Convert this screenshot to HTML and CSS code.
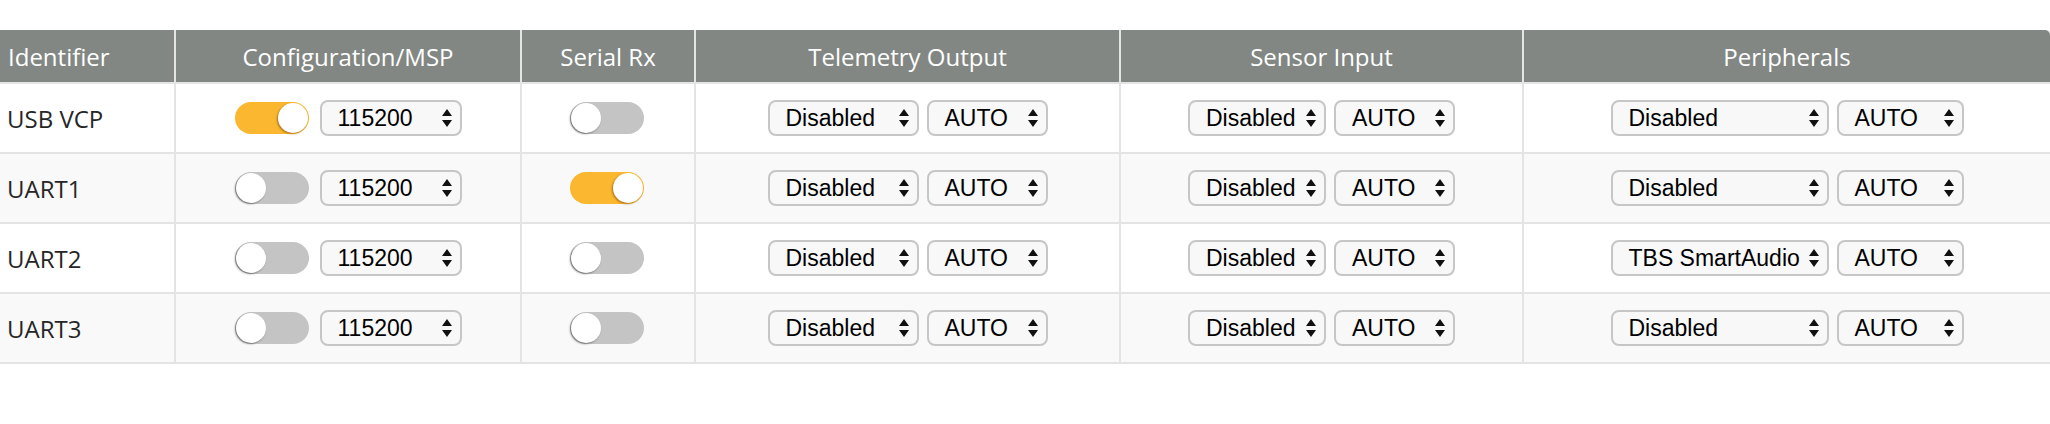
FILE: index.html
```html
<!DOCTYPE html>
<html>
<head>
<meta charset="utf-8">
<link rel="stylesheet" href="styles.css">
</head>
<body>
<div class="wrap">
<table class="ports">
  <colgroup>
    <col class="c-id"><col class="c-cfg"><col class="c-rx"><col class="c-tel"><col class="c-sen"><col class="c-per">
  </colgroup>
  <thead>
    <tr>
      <th class="left">Identifier</th>
      <th>Configuration/MSP</th>
      <th>Serial Rx</th>
      <th>Telemetry Output</th>
      <th>Sensor Input</th>
      <th class="last">Peripherals</th>
    </tr>
  </thead>
  <tbody>
    <tr>
      <td class="left">USB VCP</td>
      <td><div class="cell"><span class="toggle on"><span class="knob"></span></span><div class="sel w-baud"><span>115200</span><svg class="arr" viewBox="0 0 10 18"><path d="M5 0 L10 7 L0 7 Z M0 11 L10 11 L5 18 Z"/></svg></div></div></td>
      <td><div class="cell"><span class="toggle"><span class="knob"></span></span></div></td>
      <td><div class="cell"><div class="sel w-tel"><span>Disabled</span><svg class="arr" viewBox="0 0 10 18"><path d="M5 0 L10 7 L0 7 Z M0 11 L10 11 L5 18 Z"/></svg></div><div class="sel w-auto"><span>AUTO</span><svg class="arr" viewBox="0 0 10 18"><path d="M5 0 L10 7 L0 7 Z M0 11 L10 11 L5 18 Z"/></svg></div></div></td>
      <td><div class="cell"><div class="sel w-sen"><span>Disabled</span><svg class="arr" viewBox="0 0 10 18"><path d="M5 0 L10 7 L0 7 Z M0 11 L10 11 L5 18 Z"/></svg></div><div class="sel w-auto"><span>AUTO</span><svg class="arr" viewBox="0 0 10 18"><path d="M5 0 L10 7 L0 7 Z M0 11 L10 11 L5 18 Z"/></svg></div></div></td>
      <td><div class="cell"><div class="sel w-per"><span>Disabled</span><svg class="arr" viewBox="0 0 10 18"><path d="M5 0 L10 7 L0 7 Z M0 11 L10 11 L5 18 Z"/></svg></div><div class="sel w-auto2"><span>AUTO</span><svg class="arr" viewBox="0 0 10 18"><path d="M5 0 L10 7 L0 7 Z M0 11 L10 11 L5 18 Z"/></svg></div></div></td>
    </tr>
    <tr class="alt">
      <td class="left">UART1</td>
      <td><div class="cell"><span class="toggle"><span class="knob"></span></span><div class="sel w-baud"><span>115200</span><svg class="arr" viewBox="0 0 10 18"><path d="M5 0 L10 7 L0 7 Z M0 11 L10 11 L5 18 Z"/></svg></div></div></td>
      <td><div class="cell"><span class="toggle on"><span class="knob"></span></span></div></td>
      <td><div class="cell"><div class="sel w-tel"><span>Disabled</span><svg class="arr" viewBox="0 0 10 18"><path d="M5 0 L10 7 L0 7 Z M0 11 L10 11 L5 18 Z"/></svg></div><div class="sel w-auto"><span>AUTO</span><svg class="arr" viewBox="0 0 10 18"><path d="M5 0 L10 7 L0 7 Z M0 11 L10 11 L5 18 Z"/></svg></div></div></td>
      <td><div class="cell"><div class="sel w-sen"><span>Disabled</span><svg class="arr" viewBox="0 0 10 18"><path d="M5 0 L10 7 L0 7 Z M0 11 L10 11 L5 18 Z"/></svg></div><div class="sel w-auto"><span>AUTO</span><svg class="arr" viewBox="0 0 10 18"><path d="M5 0 L10 7 L0 7 Z M0 11 L10 11 L5 18 Z"/></svg></div></div></td>
      <td><div class="cell"><div class="sel w-per"><span>Disabled</span><svg class="arr" viewBox="0 0 10 18"><path d="M5 0 L10 7 L0 7 Z M0 11 L10 11 L5 18 Z"/></svg></div><div class="sel w-auto2"><span>AUTO</span><svg class="arr" viewBox="0 0 10 18"><path d="M5 0 L10 7 L0 7 Z M0 11 L10 11 L5 18 Z"/></svg></div></div></td>
    </tr>
    <tr>
      <td class="left">UART2</td>
      <td><div class="cell"><span class="toggle"><span class="knob"></span></span><div class="sel w-baud"><span>115200</span><svg class="arr" viewBox="0 0 10 18"><path d="M5 0 L10 7 L0 7 Z M0 11 L10 11 L5 18 Z"/></svg></div></div></td>
      <td><div class="cell"><span class="toggle"><span class="knob"></span></span></div></td>
      <td><div class="cell"><div class="sel w-tel"><span>Disabled</span><svg class="arr" viewBox="0 0 10 18"><path d="M5 0 L10 7 L0 7 Z M0 11 L10 11 L5 18 Z"/></svg></div><div class="sel w-auto"><span>AUTO</span><svg class="arr" viewBox="0 0 10 18"><path d="M5 0 L10 7 L0 7 Z M0 11 L10 11 L5 18 Z"/></svg></div></div></td>
      <td><div class="cell"><div class="sel w-sen"><span>Disabled</span><svg class="arr" viewBox="0 0 10 18"><path d="M5 0 L10 7 L0 7 Z M0 11 L10 11 L5 18 Z"/></svg></div><div class="sel w-auto"><span>AUTO</span><svg class="arr" viewBox="0 0 10 18"><path d="M5 0 L10 7 L0 7 Z M0 11 L10 11 L5 18 Z"/></svg></div></div></td>
      <td><div class="cell"><div class="sel w-per"><span>TBS SmartAudio</span><svg class="arr" viewBox="0 0 10 18"><path d="M5 0 L10 7 L0 7 Z M0 11 L10 11 L5 18 Z"/></svg></div><div class="sel w-auto2"><span>AUTO</span><svg class="arr" viewBox="0 0 10 18"><path d="M5 0 L10 7 L0 7 Z M0 11 L10 11 L5 18 Z"/></svg></div></div></td>
    </tr>
    <tr class="alt">
      <td class="left">UART3</td>
      <td><div class="cell"><span class="toggle"><span class="knob"></span></span><div class="sel w-baud"><span>115200</span><svg class="arr" viewBox="0 0 10 18"><path d="M5 0 L10 7 L0 7 Z M0 11 L10 11 L5 18 Z"/></svg></div></div></td>
      <td><div class="cell"><span class="toggle"><span class="knob"></span></span></div></td>
      <td><div class="cell"><div class="sel w-tel"><span>Disabled</span><svg class="arr" viewBox="0 0 10 18"><path d="M5 0 L10 7 L0 7 Z M0 11 L10 11 L5 18 Z"/></svg></div><div class="sel w-auto"><span>AUTO</span><svg class="arr" viewBox="0 0 10 18"><path d="M5 0 L10 7 L0 7 Z M0 11 L10 11 L5 18 Z"/></svg></div></div></td>
      <td><div class="cell"><div class="sel w-sen"><span>Disabled</span><svg class="arr" viewBox="0 0 10 18"><path d="M5 0 L10 7 L0 7 Z M0 11 L10 11 L5 18 Z"/></svg></div><div class="sel w-auto"><span>AUTO</span><svg class="arr" viewBox="0 0 10 18"><path d="M5 0 L10 7 L0 7 Z M0 11 L10 11 L5 18 Z"/></svg></div></div></td>
      <td><div class="cell"><div class="sel w-per"><span>Disabled</span><svg class="arr" viewBox="0 0 10 18"><path d="M5 0 L10 7 L0 7 Z M0 11 L10 11 L5 18 Z"/></svg></div><div class="sel w-auto2"><span>AUTO</span><svg class="arr" viewBox="0 0 10 18"><path d="M5 0 L10 7 L0 7 Z M0 11 L10 11 L5 18 Z"/></svg></div></div></td>
    </tr>
  </tbody>
</table>
</div>
</body>
</html>
```

FILE: styles.css
```css
html, body {
  margin: 0;
  padding: 0;
  background: #ffffff;
}

.wrap {
  padding-top: 30px;
}

.ports {
  width: 2050px;
  table-layout: fixed;
  border-collapse: separate;
  border-spacing: 0;
  font-family: "Open Sans", "DejaVu Sans", sans-serif;
  font-size: 24px;
}

.c-id { width: 174px; }
.c-cfg { width: 346px; }
.c-rx { width: 174px; }
.c-tel { width: 425px; }
.c-sen { width: 403px; }
.c-per { width: 528px; }

.ports th {
  background: #828784;
  color: #ffffff;
  font-weight: 400;
  height: 54px;
  padding: 0;
  text-align: center;
  border-left: 2px solid #e4e4e4;
  border-bottom: 2px solid #e4e4e4;
  box-sizing: border-box;
}

.ports th.left {
  border-left: none;
  text-align: left;
  padding-left: 8px;
}

.ports th.last {
  border-top-right-radius: 5px;
}

.ports td {
  height: 70px;
  padding: 0;
  box-sizing: border-box;
  border-left: 2px solid #e4e4e4;
  border-bottom: 2px solid #e4e4e4;
  color: #262626;
  background: #ffffff;
}

.ports tr.alt td {
  background: #f9f9f9;
}

.ports td.left {
  border-left: none;
  padding-left: 7px;
}

.cell {
  display: flex;
  justify-content: center;
  align-items: center;
  gap: 8px;
}

.toggle {
  position: relative;
  width: 74px;
  height: 32px;
  border-radius: 16px;
  background: #c4c4c4;
  margin-right: 3px;
  flex: none;
}

.toggle .knob {
  position: absolute;
  top: 1px;
  left: 1px;
  width: 30px;
  height: 30px;
  border-radius: 50%;
  background: #ffffff;
  box-shadow: -1px 1px 2px rgba(0, 0, 0, 0.45);
}

.toggle.on {
  background: #fbb72f;
}

.toggle.on .knob {
  left: auto;
  right: 1px;
  box-shadow: -1px 1px 2px rgba(120, 70, 0, 0.6);
}

.sel {
  display: flex;
  align-items: center;
  justify-content: space-between;
  height: 36px;
  box-sizing: border-box;
  border: 2px solid #c6c6c6;
  border-radius: 8px;
  background: #f8f8f8;
  padding: 0 8px 0 16px;
  font-family: "Liberation Sans", Arial, sans-serif;
  font-size: 23px;
  color: #000000;
  flex: none;
}

.sel .arr {
  width: 10px;
  height: 18px;
  fill: #111111;
  flex: none;
}

.w-baud { width: 142px; }
.w-tel { width: 151px; }
.w-sen { width: 138px; }
.w-per { width: 218px; }
.w-auto { width: 121px; }
.w-auto2 { width: 127px; }
```
